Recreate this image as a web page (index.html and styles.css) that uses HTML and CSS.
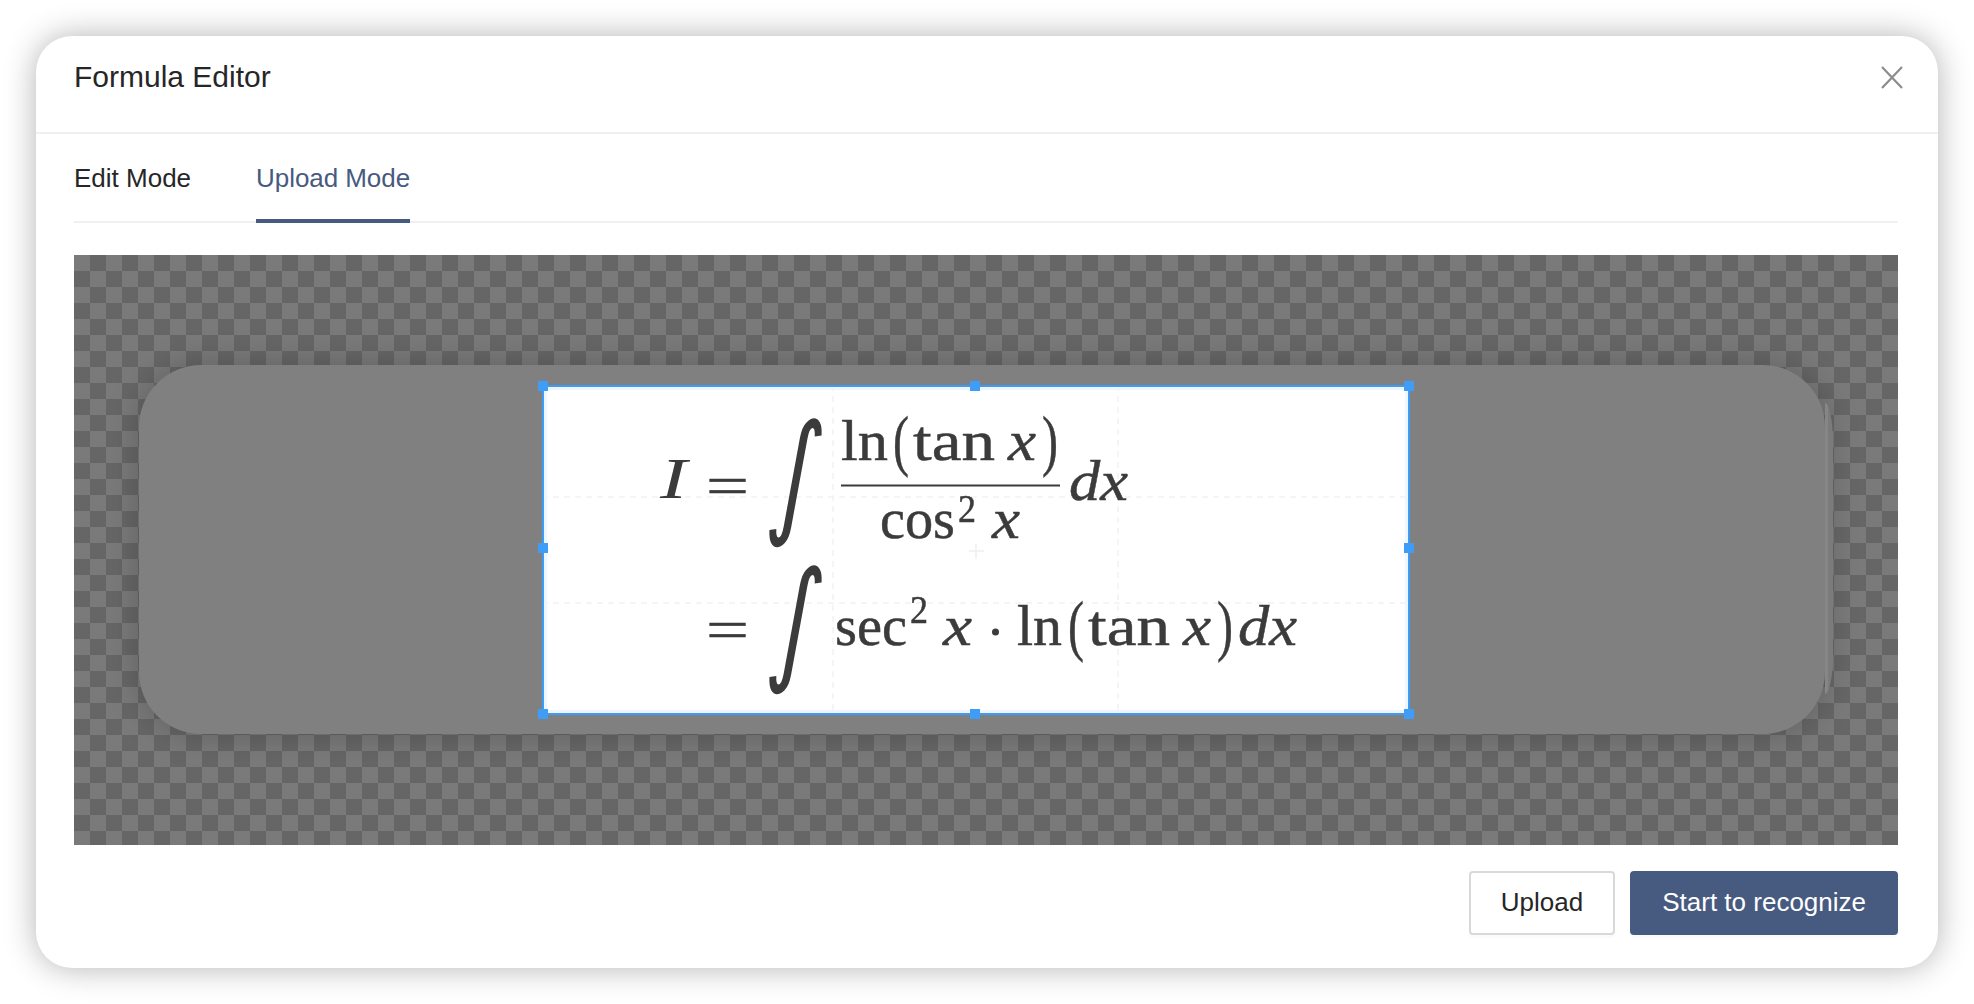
FILE: index.html
```html
<!DOCTYPE html>
<html lang="en">
<head>
<meta charset="utf-8">
<title>Formula Editor</title>
<link rel="stylesheet" href="styles.css">
</head>
<body>
<div class="modal">
  <header class="modal-head">
    <h1 class="modal-title">Formula Editor</h1>
    <button class="close" aria-label="Close">
      <svg width="22" height="23" viewBox="0 0 22 23"><path d="M1 1 21 22M21 1 1 22"/></svg>
    </button>
  </header>
  <div class="modal-body">
    <nav class="tabs">
      <span class="tab">Edit Mode</span>
      <span class="tab tab-active">Upload Mode</span>
    </nav>
    <div class="stage">
      <div class="pill"></div>
      <div class="crop">
        <svg class="formula" width="868" height="330" viewBox="542 385 868 330">
          <g class="guides">
            <path d="M542 497H1410M542 603H1410M833 385V715M1118 385V715"/>
            <path class="cross" d="M969 551H984M976 544V559"/>
          </g>
          <text class="it cap" x="660" y="498" textLength="27" lengthAdjust="spacingAndGlyphs">I</text>
          <text class="rm" x="706" y="505" textLength="43" lengthAdjust="spacingAndGlyphs">=</text>
          <text class="int" text-anchor="middle" transform="translate(790 519) skewX(-8.500) scale(.85 1.210)">∫</text>
          <text class="rm" x="841" y="460" textLength="47" lengthAdjust="spacingAndGlyphs">ln</text>
          <text class="paren" x="893" y="463" textLength="16" lengthAdjust="spacingAndGlyphs">(</text>
          <text class="rm" x="913" y="460" textLength="82" lengthAdjust="spacingAndGlyphs">tan</text>
          <text class="it" x="1008" y="460" textLength="28" lengthAdjust="spacingAndGlyphs">x</text>
          <text class="paren" x="1042" y="463" textLength="16" lengthAdjust="spacingAndGlyphs">)</text>
          <rect class="bar" x="841" y="484.5" width="219" height="2"/>
          <text class="rm" x="880" y="538" textLength="75" lengthAdjust="spacingAndGlyphs">cos</text>
          <text class="sup" x="958" y="522" textLength="18" lengthAdjust="spacingAndGlyphs">2</text>
          <text class="it" x="992" y="538" textLength="28" lengthAdjust="spacingAndGlyphs">x</text>
          <text class="it" x="1069" y="500" textLength="59" lengthAdjust="spacingAndGlyphs">dx</text>
          <text class="rm" x="706" y="649" textLength="43" lengthAdjust="spacingAndGlyphs">=</text>
          <text class="int" text-anchor="middle" transform="translate(790 666) skewX(-8.500) scale(.85 1.210)">∫</text>
          <text class="rm" x="835" y="645" textLength="72" lengthAdjust="spacingAndGlyphs">sec</text>
          <text class="sup" x="910" y="623" textLength="18" lengthAdjust="spacingAndGlyphs">2</text>
          <text class="it" x="943" y="645" textLength="29" lengthAdjust="spacingAndGlyphs">x</text>
          <circle class="dot" cx="995.500" cy="632" r="3.500"/>
          <text class="rm" x="1017" y="645" textLength="45" lengthAdjust="spacingAndGlyphs">ln</text>
          <text class="paren" x="1068" y="648" textLength="16" lengthAdjust="spacingAndGlyphs">(</text>
          <text class="rm" x="1088" y="645" textLength="82" lengthAdjust="spacingAndGlyphs">tan</text>
          <text class="it" x="1183" y="645" textLength="28" lengthAdjust="spacingAndGlyphs">x</text>
          <text class="paren" x="1217" y="648" textLength="16" lengthAdjust="spacingAndGlyphs">)</text>
          <text class="it" x="1238" y="645" textLength="59" lengthAdjust="spacingAndGlyphs">dx</text>
        </svg>
        <i class="handle h-nw"></i><i class="handle h-n"></i><i class="handle h-ne"></i>
        <i class="handle h-w"></i><i class="handle h-e"></i>
        <i class="handle h-sw"></i><i class="handle h-s"></i><i class="handle h-se"></i>
      </div>
    </div>
    <footer class="actions">
      <button class="btn">Upload</button>
      <button class="btn btn-primary">Start to recognize</button>
    </footer>
  </div>
</div>
</body>
</html>
```
FILE: styles.css
```css
* { box-sizing: border-box; }
html, body { margin: 0; height: 100%; background: #fff; overflow: hidden; }
body { padding: 36px; font-family: "Liberation Sans", Arial, sans-serif; color: #262626; }

.modal {
  width: 1902px;
  height: 932px;
  background: #fff;
  border-radius: 36px;
  box-shadow: 0 0 32px rgba(0, 0, 0, .3);
  display: flex;
  flex-direction: column;
}
.modal-head {
  height: 98px;
  padding: 0 35px 0 38px;
  display: flex;
  align-items: flex-start;
  justify-content: space-between;
  border-bottom: 2px solid #f0f0f0;
  flex: none;
}
.modal-title { margin: 17px 0 0; font-size: 30px; line-height: 48px; font-weight: 400; }
.close { margin-top: 30px; padding: 0; border: 0; background: none; line-height: 0; }
.close path { fill: none; stroke: #8c8c8c; stroke-width: 2.2; }

.modal-body { padding: 0 40px 0 38px; display: flex; flex-direction: column; flex: 1; }
.tabs { height: 89px; display: flex; gap: 65px; border-bottom: 2px solid #f0f0f0; flex: none; }
.tab { padding-top: 26px; font-size: 26px; line-height: 36px; height: 89px; }
.tab-active { color: #475a80; border-bottom: 4px solid #475a80; letter-spacing: -.06px; }

.stage {
  position: relative;
  height: 590px;
  margin-top: 32px;
  overflow: hidden;
  flex: none;
}
.stage::before {
  content: "";
  position: absolute;
  inset: -2px;
  background: repeating-conic-gradient(#666 0 25%, #7a7a7a 0 50%) 2px 2px / 32px 32px;
  filter: blur(.5px);
}
.pill {
  position: absolute;
  left: 65px; top: 110px;
  width: 1686px; height: 369px;
  border-radius: 62px;
  background: #808080;
  box-shadow: 0 0 34px rgba(0, 0, 0, .22);
}
.pill::after {
  content: "";
  position: absolute;
  right: -8px; top: 38px; bottom: 40px;
  width: 8px;
  border-radius: 0 8px 8px 0 / 0 40px 40px 0;
  background: linear-gradient(90deg, #868686 0 35%, #7b7b7b 35%);
}
.crop {
  position: absolute;
  left: 468px; top: 130px;
  width: 868px; height: 330px;
  background: #fff;
}
.crop::after {
  content: "";
  position: absolute;
  inset: 0;
  border: 2px solid #3d9bf5;
  box-shadow: inset 0 0 0 3px #edf6ff;
}
.formula { display: block; filter: blur(.45px); }
.formula text {
  fill: #3b3b3b;
  stroke: #3b3b3b;
  stroke-width: .5px;
  font-family: "Liberation Serif", "Times New Roman", serif;
}
.rm { font-size: 58px; }
.it { font-size: 58px; font-style: italic; }
.formula .cap { stroke-width: 0; }
.sup { font-size: 40px; }
.paren { font-size: 68px; }
.formula .int { font-family: "DejaVu Sans", sans-serif; font-size: 110px; stroke-width: 0; }
.bar, .dot { fill: #3b3b3b; }
.guides path { fill: none; stroke: #f2f2f2; stroke-width: 1.5; stroke-dasharray: 6 5; }
.guides .cross { stroke-dasharray: none; stroke: #efefef; }

.handle { position: absolute; width: 10px; height: 10px; background: #3f9cf7; z-index: 1; }
.h-nw, .h-n, .h-ne { top: -4px; }
.h-w, .h-e { top: 158px; }
.h-sw, .h-s, .h-se { bottom: -4px; }
.h-nw, .h-w, .h-sw { left: -4px; }
.h-n, .h-s { left: 428px; }
.h-ne, .h-e, .h-se { right: -4px; }

.actions { display: flex; justify-content: flex-end; gap: 15px; margin-top: 26px; }
.btn {
  height: 64px;
  padding: 0 30px 2px;
  border: 2px solid #d9d9d9;
  border-radius: 4px;
  background: #fff;
  color: #262626;
  font: 400 26px/1 "Liberation Sans", Arial, sans-serif;
  box-shadow: 0 3px 0 rgba(0, 0, 0, .015);
}
.btn-primary { background: #475a80; border-color: #475a80; color: #fff; }
```
